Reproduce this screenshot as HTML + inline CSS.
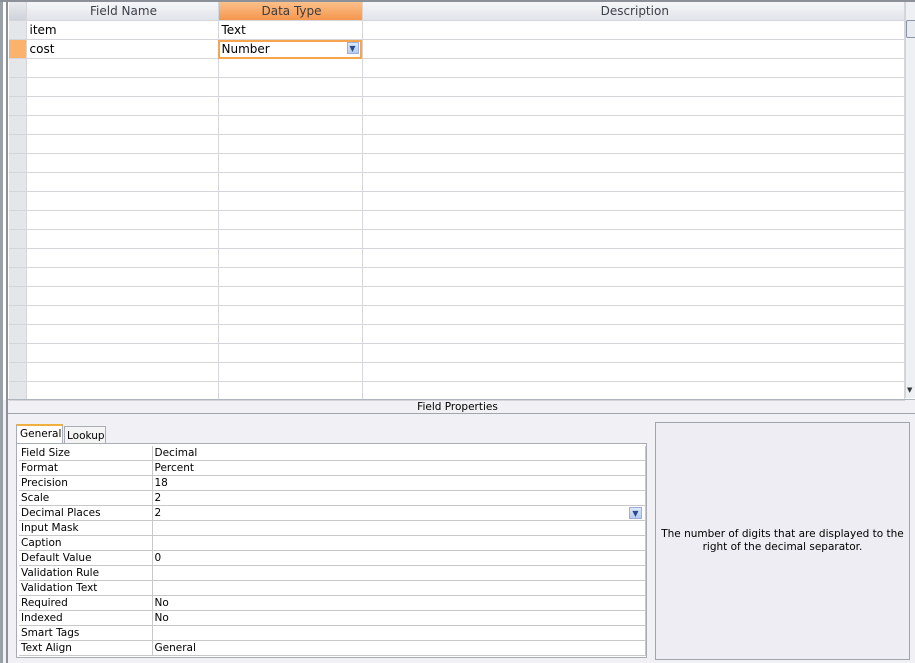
<!DOCTYPE html><html><head><style>
body{margin:0;width:915px;height:663px;background:#f0f0f5;font-family:"DejaVu Sans","Liberation Sans",sans-serif;position:relative;overflow:hidden}
.a{position:absolute}
.grid td{border-right:1px solid #d4d6dc;border-bottom:1px solid #d4d6dc;height:18px;padding:0 0 0 3px;font-size:12px;color:#000;white-space:nowrap}
table{border-collapse:collapse;table-layout:fixed}
.props td{border-right:1px solid #c8c8c8;border-bottom:1px solid #c8c8c8;height:14px;padding:0 0 0 2px;font-size:10.5px;white-space:nowrap}
</style></head><body>
<div class="a" style="left:0;top:0;width:915px;height:400px;background:#fff"></div>
<div class="a" style="left:0;top:0;width:3px;height:663px;background:#9aa0a8"></div>
<div class="a" style="left:6px;top:0;width:2px;height:663px;background:#8c9098"></div>
<div class="a" style="left:0;top:0;width:915px;height:2px;background:#8c9098"></div>
<table class="a grid" style="left:9px;top:2px;width:896px">
<colgroup><col style="width:17px"><col style="width:192px"><col style="width:144px"><col></colgroup>
<tr style="background:linear-gradient(#f6f7f9,#dfe2e8)"><td style="height:17px;background:linear-gradient(#e8eaee,#cfd3da)"></td><td style="text-align:center;color:#3c4048;height:17px">Field Name</td><td style="text-align:center;background:linear-gradient(#fbc08a,#f6964e);color:#3c3c3c">Data Type</td><td style="text-align:center;color:#3c4048">Description</td></tr>
<tr><td style="background:#e4e6ea"></td><td>item</td><td>Text</td><td></td></tr>
<tr><td style="background:#f9b36d"></td><td>cost</td><td style="outline:2px solid #f6a54e;outline-offset:-2px;position:relative">Number<span style="position:absolute;right:3px;top:2px;width:12px;height:12px;background:linear-gradient(#dce8fa,#b6cdf0);border:1px solid #9ab0d6;font-size:8px;line-height:12px;text-align:center;color:#2a4a8a;box-sizing:border-box">&#9660;</span></td><td></td></tr>
<tr><td style="background:#e4e6ea"></td><td></td><td></td><td></td></tr><tr><td style="background:#e4e6ea"></td><td></td><td></td><td></td></tr><tr><td style="background:#e4e6ea"></td><td></td><td></td><td></td></tr><tr><td style="background:#e4e6ea"></td><td></td><td></td><td></td></tr><tr><td style="background:#e4e6ea"></td><td></td><td></td><td></td></tr><tr><td style="background:#e4e6ea"></td><td></td><td></td><td></td></tr><tr><td style="background:#e4e6ea"></td><td></td><td></td><td></td></tr><tr><td style="background:#e4e6ea"></td><td></td><td></td><td></td></tr><tr><td style="background:#e4e6ea"></td><td></td><td></td><td></td></tr><tr><td style="background:#e4e6ea"></td><td></td><td></td><td></td></tr><tr><td style="background:#e4e6ea"></td><td></td><td></td><td></td></tr><tr><td style="background:#e4e6ea"></td><td></td><td></td><td></td></tr><tr><td style="background:#e4e6ea"></td><td></td><td></td><td></td></tr><tr><td style="background:#e4e6ea"></td><td></td><td></td><td></td></tr><tr><td style="background:#e4e6ea"></td><td></td><td></td><td></td></tr><tr><td style="background:#e4e6ea"></td><td></td><td></td><td></td></tr><tr><td style="background:#e4e6ea"></td><td></td><td></td><td></td></tr><tr><td style="background:#e4e6ea"></td><td></td><td></td><td></td></tr>
</table>
<div class="a" style="left:905px;top:2px;width:10px;height:396px;background:#eef0f4;border-left:1px solid #d0d4da"></div>
<div class="a" style="left:906px;top:20px;width:9px;height:16px;background:#e8ebf0;border:1px solid #8a94a4;border-radius:2px"></div>
<div class="a" style="left:907px;top:386px;font-size:7px;color:#333">&#9660;</div>
<div class="a" style="left:8px;top:399px;width:907px;height:1px;background:#b0b4bc"></div>
<div class="a" style="left:8px;top:413px;width:907px;height:1px;background:#a0a4ac"></div>
<div class="a" style="left:0;top:401px;width:915px;text-align:center;font-size:10.5px;color:#000">Field Properties</div>
<div class="a" style="left:16px;top:424px;width:47px;height:20px;background:#fff;border:1px solid #a8acb4;border-top:2px solid #f0b040;border-bottom:none;font-size:10.5px;padding:2px 0 0 3px;box-sizing:border-box">General</div>
<div class="a" style="left:64px;top:426px;width:42px;height:18px;background:#f4f4f4;border:1px solid #a8acb4;border-bottom:none;font-size:10.5px;padding:3px 0 0 2px;box-sizing:border-box">Lookup</div>
<div class="a" style="left:16px;top:443px;width:631px;height:215px;background:#fff;border:1px solid #a8acb4;box-sizing:border-box"></div>
<table class="a props" style="left:19px;top:446px;width:627px">
<colgroup><col style="width:133px"><col></colgroup>
<tr><td>Field Size</td><td>Decimal</td></tr><tr><td>Format</td><td>Percent</td></tr><tr><td>Precision</td><td>18</td></tr><tr><td>Scale</td><td>2</td></tr>
<tr><td>Decimal Places</td><td style="position:relative">2<span style="position:absolute;right:3px;top:1px;width:13px;height:12px;background:linear-gradient(#dce8fa,#b6cdf0);border:1px solid #9ab0d6;font-size:8px;line-height:11px;text-align:center;color:#2a4a8a;box-sizing:border-box">&#9660;</span></td></tr>
<tr><td>Input Mask</td><td></td></tr><tr><td>Caption</td><td></td></tr><tr><td>Default Value</td><td>0</td></tr><tr><td>Validation Rule</td><td></td></tr><tr><td>Validation Text</td><td></td></tr><tr><td>Required</td><td>No</td></tr><tr><td>Indexed</td><td>No</td></tr><tr><td>Smart Tags</td><td></td></tr><tr><td>Text Align</td><td>General</td></tr>
</table>
<div class="a" style="left:655px;top:422px;width:255px;height:238px;background:#ededf3;border:1px solid #a0a4ac;box-sizing:border-box;display:flex;align-items:center;justify-content:center;text-align:center;font-size:10.5px;line-height:13px">The number of digits that are displayed to the<br>right of the decimal separator.</div>
</body></html>
